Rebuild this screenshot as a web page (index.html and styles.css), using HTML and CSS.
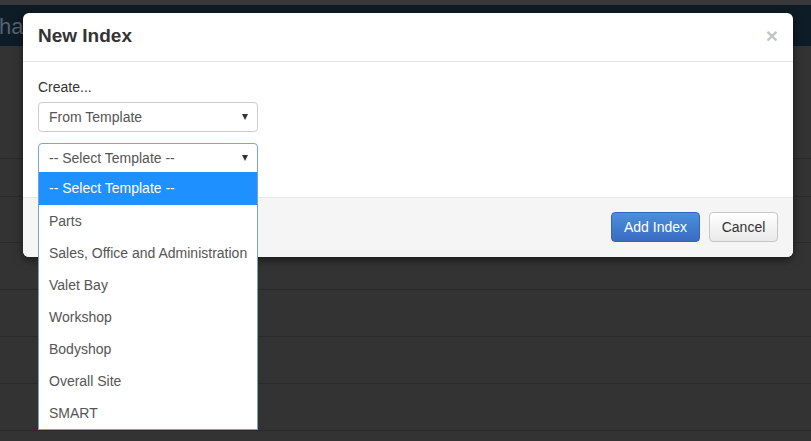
FILE: index.html
```html
<!DOCTYPE html>
<html>
<head>
<meta charset="utf-8">
<title>New Index</title>
<link rel="stylesheet" href="styles.css">
</head>
<body>
<div class="page">
  <div class="navbar"><span class="brand">ha</span></div>
  <div class="row row-head"></div>
  <div class="row r1"></div>
  <div class="row r2"></div>
  <div class="row r3"></div>
  <div class="row r3"></div>
  <div class="row r3"></div>
  <div class="row r3"></div>
</div>

<div class="modal">
  <div class="modal-header">
    <h4 class="modal-title">New Index</h4>
    <span class="close">×</span>
  </div>
  <div class="modal-body">
    <label class="label">Create...</label>
    <div class="select">
      <span>From Template</span>
      <span class="caret"></span>
    </div>
    <div class="select select-focus">
      <span>-- Select Template --</span>
      <span class="caret"></span>
      <ul class="options">
        <li class="opt active">-- Select Template --</li>
        <li class="opt">Parts</li>
        <li class="opt">Sales, Office and Administration</li>
        <li class="opt">Valet Bay</li>
        <li class="opt">Workshop</li>
        <li class="opt">Bodyshop</li>
        <li class="opt">Overall Site</li>
        <li class="opt">SMART</li>
      </ul>
    </div>
  </div>
  <div class="modal-footer">
    <button class="btn btn-primary">Add Index</button>
    <button class="btn btn-default">Cancel</button>
  </div>
</div>
</body>
</html>
```

FILE: styles.css
```css
html, body {
  margin: 0;
  padding: 0;
}
body {
  background: #333333;
  font-family: "Liberation Sans", Arial, sans-serif;
  font-size: 14px;
  color: #333;
  width: 811px;
  height: 441px;
  overflow: hidden;
  position: relative;
}
.page {
  padding-top: 5px;
  background: #393939;
}
.navbar {
  height: 41px;
  background: #0e1c27;
  display: flex;
  align-items: center;
  overflow: hidden;
}
.brand {
  color: #56636d;
  font-size: 22px;
  margin-left: -1px;
  margin-top: 2px;
}
.row {
  background: #333333;
  border-bottom: 1px solid #2a2a2a;
}
.row-head { height: 112px; }
.r1 { height: 37px; }
.r2 { height: 45px; }
.r3 { height: 46px; }

.modal {
  position: absolute;
  left: 23px;
  top: 13px;
  width: 770px;
  background: #fff;
  border-radius: 6px;
  box-shadow: 0 3px 9px rgba(0, 0, 0, 0.5);
}
.modal-header {
  position: relative;
  padding: 13px 15px 15px;
  border-bottom: 1px solid #e5e5e5;
}
.modal-title {
  margin: 0;
  font-size: 19px;
  line-height: 20px;
  font-weight: bold;
  color: #333;
}
.close {
  position: absolute;
  right: 15px;
  top: 13px;
  font-size: 21px;
  line-height: 20px;
  font-weight: bold;
  color: #c4c4c4;
}
.modal-body {
  padding: 15px 15px 24px;
}
.label {
  display: block;
  line-height: 20px;
  margin-bottom: 5px;
  color: #333;
}
.select {
  position: relative;
  box-sizing: border-box;
  width: 220px;
  height: 30px;
  border: 1px solid #cccccc;
  border-radius: 4px;
  padding: 0 10px;
  display: flex;
  align-items: center;
  justify-content: space-between;
  color: #555;
  line-height: 28px;
}
.select + .select {
  margin-top: 11px;
}
.select-focus {
  border-color: #7ba4e0;
  border-radius: 4px 4px 0 0;
}
.caret {
  width: 0;
  height: 0;
  border-left: 3.5px solid transparent;
  border-right: 3.5px solid transparent;
  border-top: 6px solid #333;
  margin-right: -1px;
}
.options {
  position: absolute;
  left: -1px;
  top: 28px;
  width: 220px;
  box-sizing: border-box;
  margin: 0;
  padding: 0;
  list-style: none;
  background: #fff;
  border: 1px solid #7f9ed6;
  border-top: none;
  z-index: 5;
}
.opt {
  height: 32px;
  line-height: 33px;
  padding-left: 10px;
  color: #555;
  white-space: nowrap;
}
.opt.active {
  height: 33px;
  background: #1e90ff;
  color: #fff;
}
.modal-footer {
  background: #f5f5f5;
  border-top: 1px solid #e5e5e5;
  border-radius: 0 0 6px 6px;
  padding: 14px 15px 15px;
  display: flex;
  justify-content: flex-end;
  gap: 9px;
}
.btn {
  font-family: "Liberation Sans", Arial, sans-serif;
  font-size: 14px;
  height: 30px;
  line-height: 20px;
  padding: 4px 0;
  border-radius: 4px;
  box-sizing: border-box;
  margin: 0;
  white-space: nowrap;
  text-align: center;
}
.btn-primary {
  width: 89px;
  color: #fff;
  background: linear-gradient(#4a90db, #3a6bc3);
  border: 1px solid #3566b8;
}
.btn-default {
  width: 69px;
  color: #333;
  background: linear-gradient(#ffffff, #e9e9e9);
  border: 1px solid #c6c6c6;
}
```
